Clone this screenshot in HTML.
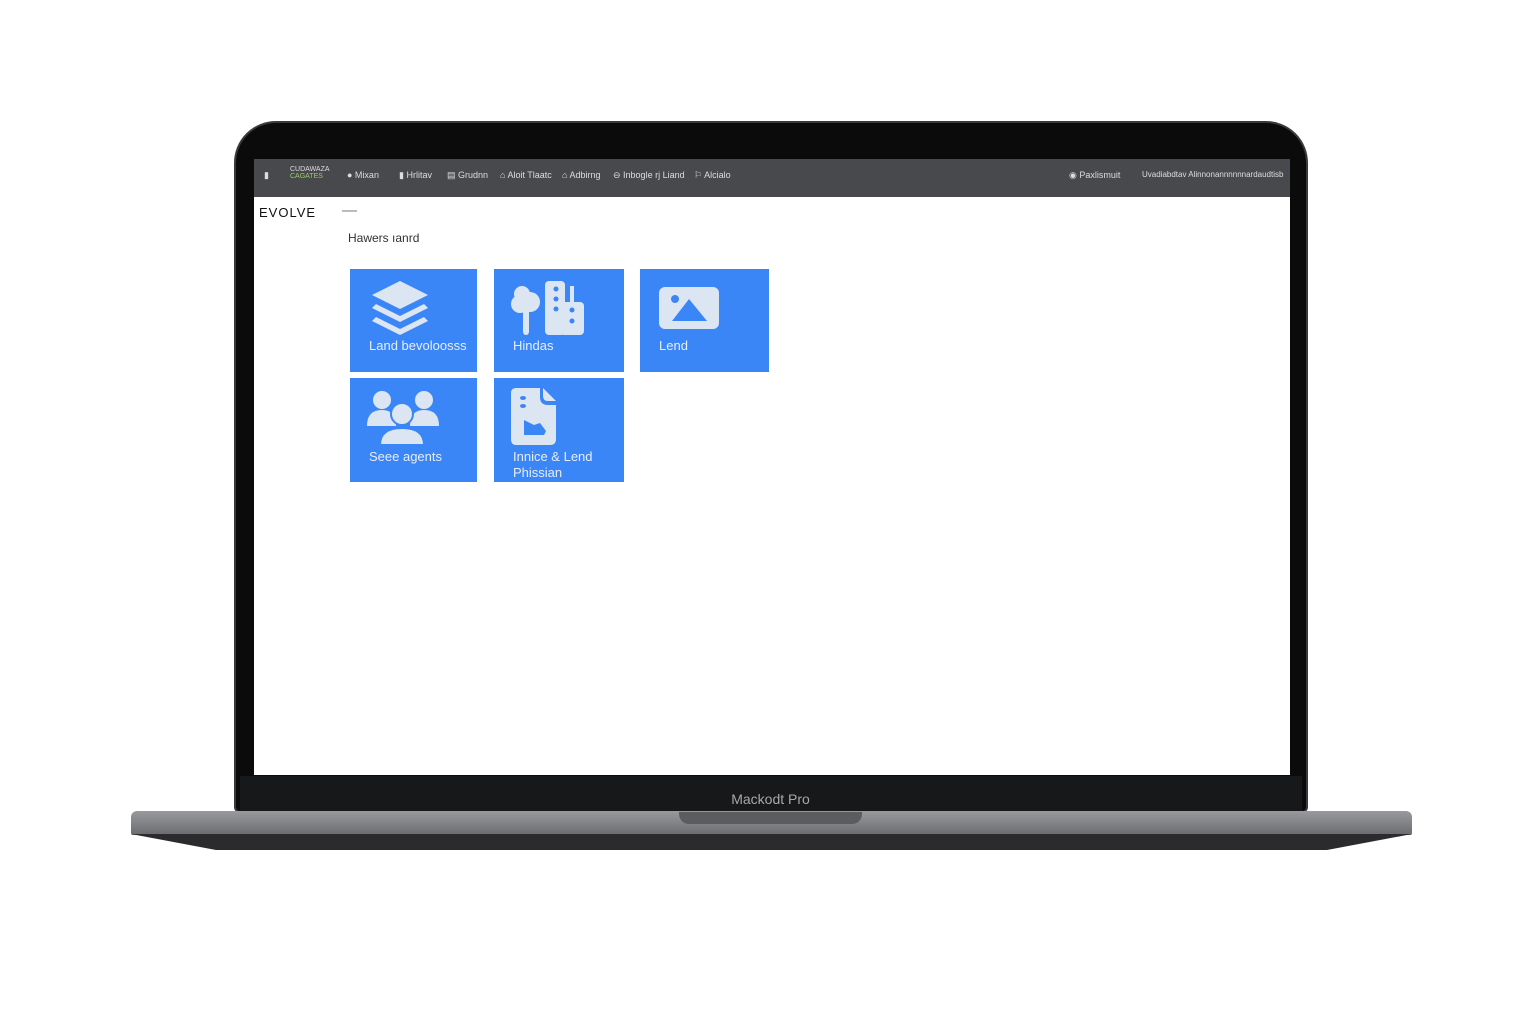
<!DOCTYPE html>
<html><head><meta charset="utf-8"><style>
*{margin:0;padding:0;box-sizing:border-box}
body{width:1536px;height:1024px;background:#fff;position:relative;overflow:hidden;font-family:"Liberation Sans",sans-serif}
.lid{position:absolute;left:234px;top:121px;width:1074px;height:692px;background:#0b0b0b;border-radius:42px 42px 6px 6px;border:2px solid #3a3a3c}
.chin{position:absolute;left:240px;top:776px;width:1062px;height:36px;background:#17181a}
.screen{position:absolute;left:254px;top:159px;width:1036px;height:616px;background:#fff;overflow:hidden}
.nav{height:38px;background:#48494d}
.navt{position:absolute;left:0;top:0;width:1536px;height:300px;font-size:9px;color:#ddd;white-space:nowrap}
.navt span{white-space:nowrap}
.tile{position:absolute;background:#3b86f7;color:#e6eef8;font-size:13px;line-height:16px}
.tile .t{position:absolute;left:19px;white-space:nowrap}
.base{position:absolute;left:131px;top:811px;width:1281px;height:24px;background:linear-gradient(#9a9a9e,#7d7e82 60%,#6a6b6f);border-radius:6px 6px 2px 2px}
.notch{position:absolute;left:679px;top:812px;width:183px;height:12px;background:#5b5c60;border-radius:0 0 10px 10px}
</style></head><body>
<div class="lid"></div>
<div class="chin"></div>
<div style="position:absolute;left:0;width:1536px;top:791px;text-align:center;color:#a8a8ab;font-size:14px;padding-left:5px">Mackodt Pro</div>
<div class="screen">
<div class="nav"></div>
<div style="position:absolute;left:5px;top:46px;font-size:13px;letter-spacing:1px;color:#111">EVOLVE</div>
<div style="position:absolute;left:88px;top:51px;width:15px;height:2px;background:#bbb"></div>
<div style="position:absolute;left:94px;top:72px;font-size:12px;color:#333">Hawers ıanrd</div>
</div>
<div class="navt">
<span style="position:absolute;left:264px;top:170px">▮</span>
<span style="position:absolute;left:290px;top:166px;font-size:7px;line-height:7px">CUDAWAZA<br><span style="color:#9c6">CAGATES</span></span>
<span style="position:absolute;left:347px;top:170px">● Mixan</span>
<span style="position:absolute;left:399px;top:170px">▮ Hrlitav</span>
<span style="position:absolute;left:447px;top:170px">▤ Grudnn</span>
<span style="position:absolute;left:500px;top:170px">⌂ Aloit Tlaatc</span>
<span style="position:absolute;left:562px;top:170px">⌂ Adbirng</span>
<span style="position:absolute;left:613px;top:170px">⊖ Inbogle rj Liand</span>
<span style="position:absolute;left:694px;top:170px">⚐ Alcialo</span>
<span style="position:absolute;left:1069px;top:170px">◉ Paxlismuit</span>
<span style="position:absolute;left:1142px;top:170px;font-size:8px">Uvadiabdtav Alinnonannnnnnardaudtisb</span>
</div>
<div class="tile" style="left:350px;top:269px;width:127px;height:103px">
<svg style="position:absolute;left:18px;top:10px" width="64" height="60" viewBox="0 0 64 60" fill="#dce6f2"><path d="M32 2 L60 16 L32 30 L4 16Z"/><path d="M8 25 L32 37 L56 25 L60 29 L32 43 L4 29Z"/><path d="M8 38 L32 50 L56 38 L60 42 L32 56 L4 42Z"/></svg>
<div class="t" style="top:69px">Land bevoloosss</div></div>
<div class="tile" style="left:494px;top:269px;width:130px;height:103px">
<svg style="position:absolute;left:16px;top:11px" width="76" height="56" viewBox="0 0 76 56" fill="#dce6f2"><circle cx="12" cy="14" r="8"/><circle cx="20" cy="22" r="10"/><circle cx="10" cy="24" r="9"/><rect x="13" y="24" width="6" height="31" rx="3"/><rect x="35" y="1" width="20" height="54" rx="4"/><rect x="50" y="22" width="24" height="33" rx="4"/><rect x="60" y="6" width="4" height="20"/><g fill="#3b86f7"><circle cx="46" cy="9" r="2.5"/><circle cx="46" cy="19" r="2.5"/><circle cx="46" cy="29" r="2.5"/><circle cx="62" cy="30" r="2.5"/><circle cx="62" cy="41" r="2.5"/></g></svg>
<div class="t" style="top:69px">Hindas</div></div>
<div class="tile" style="left:640px;top:269px;width:129px;height:103px">
<svg style="position:absolute;left:18px;top:17px" width="62" height="44" viewBox="0 0 62 44"><rect x="1" y="1" width="60" height="42" rx="6" fill="#dce6f2"/><circle cx="17" cy="13" r="4" fill="#3b86f7"/><path d="M14 35 L31 13 L49 35Z" fill="#3b86f7"/></svg>
<div class="t" style="top:69px">Lend</div></div>
<div class="tile" style="left:350px;top:378px;width:127px;height:104px">
<svg style="position:absolute;left:16px;top:10px" width="74" height="58" viewBox="0 0 74 58" fill="#dce6f2"><circle cx="16" cy="12" r="9"/><circle cx="58" cy="12" r="9"/><path d="M1 38 Q1 22 16 22 Q30 22 30 38Z"/><path d="M44 38 Q44 22 58 22 Q73 22 73 38Z"/><circle cx="36" cy="26" r="11" stroke="#3b86f7" stroke-width="2"/><path d="M14 57 Q14 40 36 40 Q58 40 58 57Z" stroke="#3b86f7" stroke-width="2"/></svg>
<div class="t" style="top:71px">Seee agents</div></div>
<div class="tile" style="left:494px;top:378px;width:130px;height:104px">
<svg style="position:absolute;left:16px;top:9px" width="48" height="60" viewBox="0 0 48 60" fill="#dce6f2"><path d="M6 1 H30 V10 Q30 18 38 18 H46 V52 Q46 58 40 58 H6 Q1 58 1 52 V6 Q1 1 6 1Z"/><path d="M33 1 L46 14 H38 Q33 14 33 9Z"/><g fill="#3b86f7"><ellipse cx="13" cy="11" rx="3" ry="2"/><ellipse cx="13" cy="19" rx="3" ry="2"/><path d="M14 33 L24 38 L30 36 L36 44 L34 48 L14 48Z"/></g></svg>
<div class="t" style="top:71px">Innice &amp; Lend<br>Phissian</div></div>
<div class="base"></div>
<svg style="position:absolute;left:131px;top:834px" width="1281" height="17"><path d="M0 0 H1281 L1196 16 H85Z" fill="#2b2b2e"/></svg>
<div class="notch"></div>
</body></html>
